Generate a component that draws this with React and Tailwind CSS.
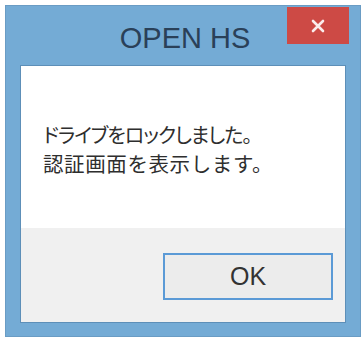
export default function App() {
    return (
        <div className="w-[362px] h-[340px] bg-white pt-[5px] pl-[5px] overflow-hidden">
            <div className="w-[356px] h-[332px] bg-[#74abd5] border border-[#6a9cc4] flex flex-col px-[14px] pb-[13px]">
                <div className="relative h-[59px] shrink-0 flex items-center justify-center">
                    <span className="text-[29px] leading-none text-[#2a4058] font-['Liberation_Sans',Arial,sans-serif] pl-[4px] pt-[6px]">OPEN HS</span>
                    <button className="absolute top-[1px] right-[-3px] w-[62px] h-[37px] bg-[#cd4a45] flex items-center justify-center">
                        <svg width="14" height="14" viewBox="0 0 14 14">
                            <path d="M2 2 L12 12 M12 2 L2 12" stroke="#fbecec" strokeWidth="2.6" strokeLinecap="round" />
                        </svg>
                    </button>
                </div>
                <div className="flex-1 flex flex-col border border-[#5d8fb8]">
                    <div className="h-[162px] bg-white pt-[55px] pl-[22px] text-[20px] leading-[28px] text-[#2e2e2e] font-['Noto_Sans_CJK_JP',sans-serif]">
                        <p className="[font-feature-settings:'palt'] tracking-[-1px]">ドライブをロックしました。</p>
                        <p className="text-[20.5px] tracking-[0.6px]">認証画面を表示します。</p>
                    </div>
                    <div className="flex-1 bg-[#f0f0f0] flex justify-end items-start pt-[25px] pr-[12px]">
                        <button className="w-[170px] h-[47px] border-2 border-[#5b9ad6] bg-[#ececec] flex items-center justify-center text-[25px] text-[#333] font-['Liberation_Sans',Arial,sans-serif]">
                            OK
                        </button>
                    </div>
                </div>
            </div>
        </div>
    );
}
